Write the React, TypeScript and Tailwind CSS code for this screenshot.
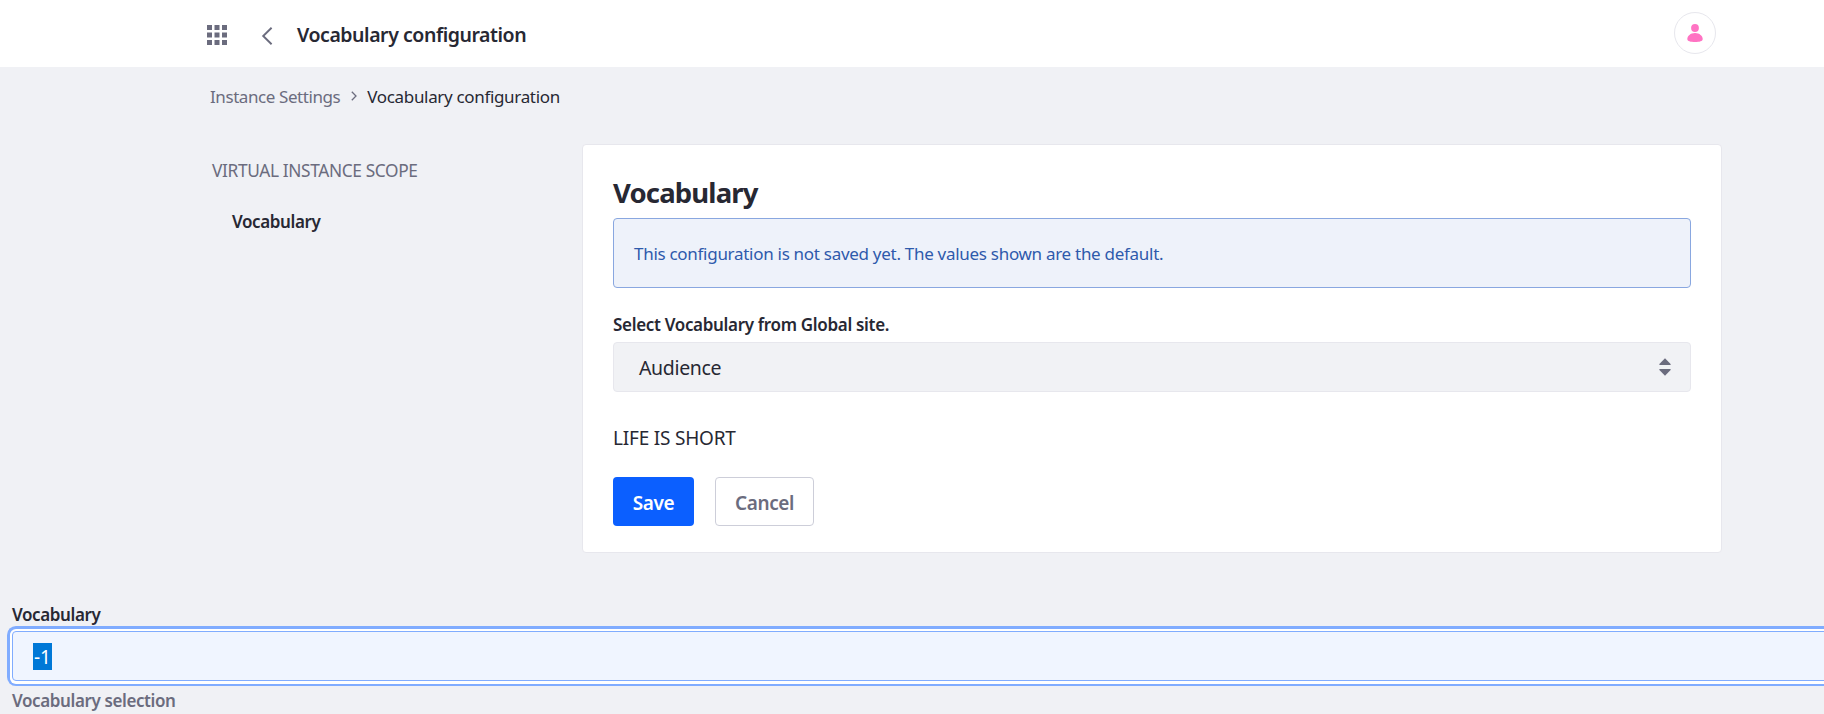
function GridIcon() {
  const cells = [0, 7.5, 15];
  return (
    <svg className="h-[20px] w-[20px] shrink-0" viewBox="0 0 20 20" fill="#6b6c7e">
      {cells.map((y) => cells.map((x) => <rect key={`${x}-${y}`} x={x} y={y} width="5" height="5" />))}
    </svg>
  );
}

function Header() {
  return (
    <header className="flex h-[67px] items-center bg-white pr-[108px] pl-[207px]">
      <div className="mt-[3px]">
        <GridIcon />
      </div>
      <svg className="mt-[4px] ml-[34px] h-[18px] w-[12px]" viewBox="0 0 12 18" fill="none" stroke="#6b6c7e" strokeWidth="1.9">
        <path d="M10.6 0.8 L2.2 9 L10.6 17.2" />
      </svg>
      <h1 className="mt-[3px] ml-[24px] text-[19.5px] leading-6 font-semibold tracking-[-0.45px]">Vocabulary configuration</h1>
      <div className="mb-px ml-auto flex size-[42px] items-center justify-center rounded-full border border-[#e7e7ed] bg-white">
        <svg className="h-[18px] w-[16px]" viewBox="0 0 16 18" fill="#ff73c3">
          <circle cx="8" cy="4" r="3.9" />
          <path d="M8 9 C3.5 9 0.3 12 0.3 15 C0.3 17.3 3.5 18 8 18 C12.5 18 15.7 17.3 15.7 15 C15.7 12 12.5 9 8 9 Z" />
        </svg>
      </div>
    </header>
  );
}

function Breadcrumb() {
  return (
    <nav className="flex items-center pt-[18px] pl-[210px] text-[17px] leading-6">
      <span className="tracking-[-0.42px] text-[#6b6c7e]">Instance Settings</span>
      <svg className="mr-[10px] mb-[2px] ml-[11px] h-[10px] w-[6px]" viewBox="0 0 6 10" fill="none" stroke="#6b6c7e" strokeWidth="1.3">
        <path d="M0.8 0.8 L5 5 L0.8 9.2" />
      </svg>
      <span className="tracking-[-0.334px]">Vocabulary configuration</span>
    </nav>
  );
}

function Card() {
  return (
    <section className="h-[409px] w-[1140px] rounded-[4px] border border-[#e7e7ed] bg-white px-[30px] pt-[32px]">
      <h2 className="text-[27.5px] leading-8 font-bold tracking-[-0.85px]">Vocabulary</h2>
      <div className="mt-[9px] flex h-[70px] items-center rounded-[4px] border border-[#89a7e0] bg-[#eef2fa] px-[20px] pt-[2px] text-[17px] tracking-[-0.288px] text-[#2e5aac]">
        This configuration is not saved yet. The values shown are the default.
      </div>
      <div className="mt-[25px] text-[17px] leading-6 font-semibold tracking-[-0.32px]">Select Vocabulary from Global site.</div>
      <div className="mt-[5px] flex h-[50px] items-center justify-between rounded-[4px] border border-[#e7e7ed] bg-[#f1f2f5] pr-[19px] pl-[25px]">
        <span className="pt-[2px] text-[19.5px] tracking-[-0.35px]">Audience</span>
        <svg className="mb-px h-[18px] w-[12px]" viewBox="0 0 12 18" fill="#6b6c7e">
          <path d="M6 0.2 L11.6 6 Q12 7 11.2 7 H0.8 Q0 7 0.4 6 Z" />
          <path d="M6 17.8 L11.6 12 Q12 11 11.2 11 H0.8 Q0 11 0.4 12 Z" />
        </svg>
      </div>
      <p className="mt-[34px] text-[19px] leading-6 tracking-[-0.2px]">LIFE IS SHORT</p>
      <div className="mt-[27px] flex gap-[21px] text-[19px] font-semibold">
        <button className="h-[49px] w-[81px] rounded-[4px] bg-[#0b5fff] pt-[4px] tracking-[-0.393px] text-white">Save</button>
        <button className="h-[49px] w-[99px] rounded-[4px] border border-[#cdced9] bg-white pt-[4px] tracking-[-0.398px] text-[#6b6c7e]">Cancel</button>
      </div>
    </section>
  );
}

export default function App() {
  return (
    <div className="h-[714px] overflow-hidden bg-[#f0f1f5] font-['Noto_Sans',sans-serif] text-[#272833]">
      <Header />
      <Breadcrumb />
      <main className="mt-[35px] flex">
        <aside className="w-[582px] pt-[15px] pl-[212px] leading-6">
          <div className="text-[17.3px] tracking-[-0.356px] text-[#6b6c7e]">VIRTUAL INSTANCE SCOPE</div>
          <div className="mt-[27px] pl-[20px] text-[17px] font-semibold tracking-[-0.379px]">Vocabulary</div>
        </aside>
        <Card />
      </main>
      <div className="pt-[50px] pl-[12px] text-[17px] leading-6 font-semibold">
        <div className="tracking-[-0.379px]">Vocabulary</div>
        <div className="mt-[4px] flex h-[50px] w-[1840px] items-center rounded-[4px] border border-[#80acff] bg-[#f0f5ff] pl-[20px] shadow-[0_0_0_2px_#fff,0_1px_0_2px_#fff,0_0_0_5px_#80acff]">
          <span className="h-[27px] w-[19px] bg-[#0078d7] pl-px text-[19px] leading-[29px] font-normal text-white">-1</span>
        </div>
        <div className="mt-[8px] tracking-[-0.39px] text-[#6b6c7e]">Vocabulary selection</div>
      </div>
    </div>
  );
}
